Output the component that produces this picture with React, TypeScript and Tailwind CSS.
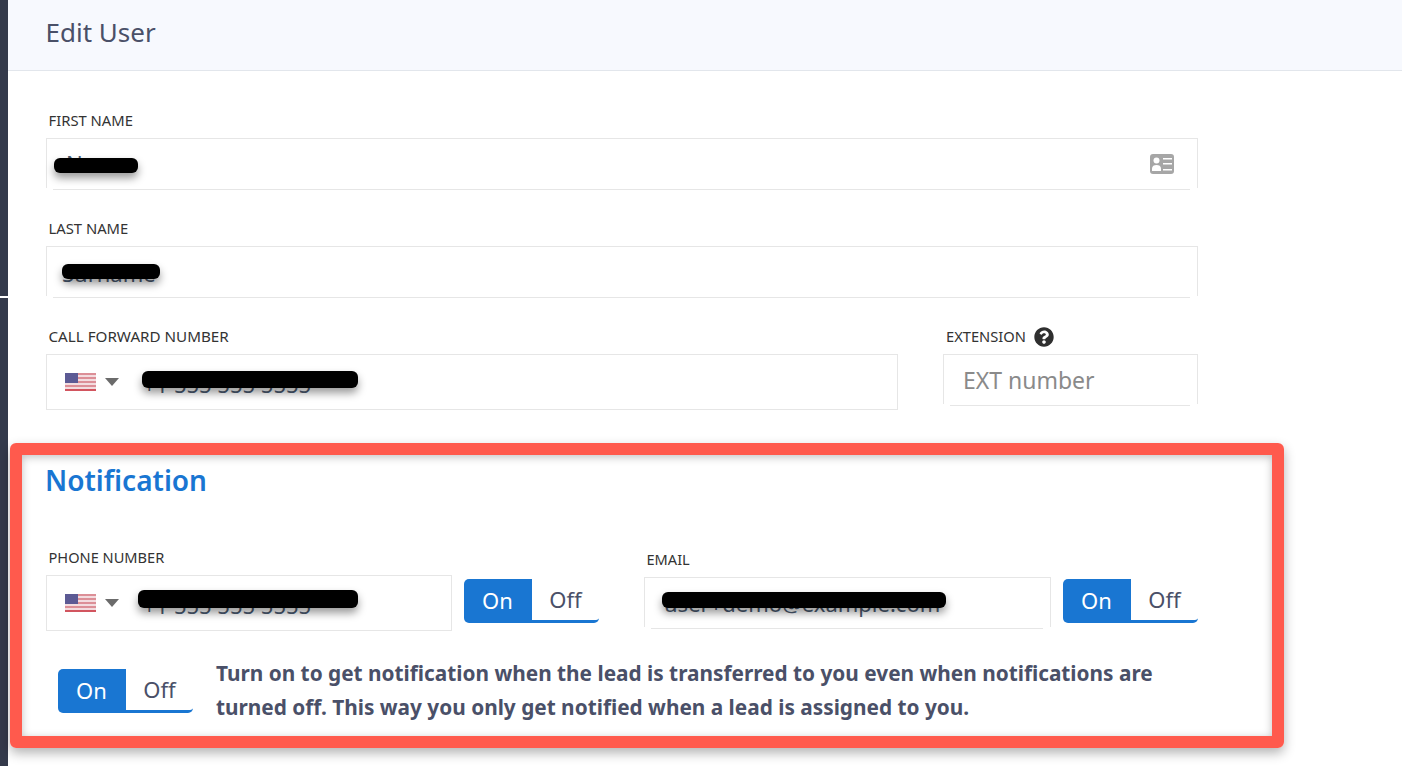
import React from 'react';
import { FaQuestionCircle } from 'react-icons/fa';

function Label({ children }: { children: React.ReactNode }) {
  return <div className="pl-[2.5px] text-[14.8px] leading-[15px] text-[#333]">{children}</div>;
}

function SmallLabel({ children }: { children: React.ReactNode }) {
  return <div className="pl-[2.5px] text-[14.6px] leading-[15px] text-[#333]">{children}</div>;
}

function Redaction({ className }: { className: string }) {
  return <div className={`absolute rounded-[6px] bg-black shadow-[0_5px_8px_rgba(0,0,0,0.4)] ${className}`} />;
}

// text field with the inset bottom line
function OpenInput({ className, children }: { className: string; children?: React.ReactNode }) {
  return (
    <div className={`relative h-[50px] border-x border-t border-[#e6e6e6] ${className}`}>
      {children}
      <div className="absolute -bottom-[2px] left-[6px] right-[7px] h-px bg-[#e6e6e6]" />
    </div>
  );
}

function Flag() {
  return (
    <svg width="31" height="18" viewBox="0 0 31 18" className="shrink-0">
      <rect width="31" height="18" fill="#f3dcdf" />
      <rect y="0" width="31" height="2" fill="#dc8f97" />
      <rect y="4" width="31" height="2" fill="#dc8f97" />
      <rect y="8" width="31" height="2" fill="#dc8f97" />
      <rect y="12" width="31" height="2" fill="#dc8f97" />
      <rect y="16" width="31" height="2" fill="#d2555f" />
      <rect width="13" height="10" fill="#5c5a94" />
    </svg>
  );
}

function Caret() {
  return (
    <svg width="14" height="8" viewBox="0 0 14 8" className="shrink-0">
      <path d="M0 0h14L7 8z" fill="#6b6b6b" />
    </svg>
  );
}

function IdCard() {
  return (
    <svg width="24" height="20" viewBox="0 0 24 20" className="absolute right-[23px] top-[15px]">
      <rect width="24" height="20" rx="3" fill="#a6a6a6" />
      <circle cx="6.5" cy="6.5" r="3" fill="#fff" />
      <path d="M2 17v-2.500C2 12 4 11 6.500 11S11 12 11 14.500V17z" fill="#fff" />
      <path d="M13 4h9v1.500h-9zM13 9h9v1.500h-9zM13 15h9v1.500h-9z" fill="#fff" />
    </svg>
  );
}

function PhoneBox({ className, barClass }: { className: string; barClass: string }) {
  return (
    <div className={`relative flex h-[56px] items-center border border-[#e6e6e6] pl-[18px] ${className}`}>
      <Flag />
      <div className="ml-[9px]"><Caret /></div>
      <span className="ml-[24px] pt-[4px] text-[22px] text-[#4a5a70]">+1 555 555 5555</span>
      <Redaction className={barClass} />
    </div>
  );
}

function Toggle({ className = '' }: { className?: string }) {
  return (
    <div className={`flex h-[44px] w-[135px] shrink-0 text-[22px] ${className}`}>
      <div className="flex w-[68px] items-center justify-center rounded-l-[5px] bg-[#1976d2] pb-[1px] pr-[1px] text-white">On</div>
      <div className="flex flex-1 items-center justify-center rounded-br-[5px] border-b-[3px] border-[#1976d2] text-[#4a5068]">Off</div>
    </div>
  );
}

export default function App() {
  return (
    <div className="flex h-[766px] w-[1402px] overflow-hidden bg-white font-['Noto_Sans',sans-serif]">
      <div className="flex w-2 shrink-0 flex-col">
        <div className="h-[296px] bg-[#343a4b]" />
        <div className="mt-[2px] flex-1 bg-[#343a4b]" />
      </div>
      <div className="flex-1">
        <div className="flex h-[71px] items-center border-b border-[#e2e6ec] bg-[#f7f9fe] pb-[6px] pl-[37.5px] text-[26px] text-[#4a5068]">
          Edit User
        </div>
        <div className="pl-[38px] pt-[42px]">
          <div className="w-[1152px]">
            <Label>FIRST NAME</Label>
            <OpenInput className="mt-[10px]">
              <span className="absolute left-[19px] top-[8px] text-[22px] text-[#4a5a70]">Name</span>
              <Redaction className="left-[7px] top-[19px] h-[15px] w-[84px]" />
              <IdCard />
            </OpenInput>

            <div className="mt-[33px]"><Label>LAST NAME</Label></div>
            <OpenInput className="mt-[10px]">
              <span className="absolute left-[15px] top-[10px] text-[22px] text-[#4a5a70]">Surname</span>
              <Redaction className="left-[15px] top-[17px] h-[15px] w-[98px]" />
            </OpenInput>

            <div className="mt-[33px] flex items-start">
              <div className="w-[852px]">
                <div className="pl-[2.5px] text-[15.2px] leading-[15px] text-[#333]">CALL FORWARD NUMBER</div>
                <PhoneBox className="mt-[10px]" barClass="left-[95px] top-[16px] h-[17px] w-[216px]" />
              </div>
              <div className="-mt-[2px] ml-[45px] flex-1">
                <div className="flex items-start gap-[8px] pl-[3px]">
                  <span className="pt-[1px] text-[14.7px] leading-[16px] text-[#333]">EXTENSION</span>
                  <FaQuestionCircle className="text-[20px] text-[#2f2f2f]" />
                </div>
                <OpenInput className="mt-[7px]">
                  <span className="absolute left-[19px] top-[8px] text-[23px] text-[#8a8a8a]">EXT number</span>
                </OpenInput>
              </div>
            </div>
          </div>

          {/* Notification block with its red outline */}
          <div className="ml-[-36px] mt-[33px] h-[305px] w-[1274px] rounded-[6px] border-[12px] border-[#ff5a4d] pl-[24px] shadow-[0_5px_12px_rgba(0,0,0,0.3),inset_0_2px_8px_rgba(0,0,0,0.25)]">
            <div className="-ml-px flex h-[52px] items-center pb-[2px] text-[28px] font-semibold text-[#1976d2]">Notification</div>

            <div className="mt-[43px] flex items-start">
              <div className="w-[406px]">
                <SmallLabel>PHONE NUMBER</SmallLabel>
                <PhoneBox className="mt-[10px]" barClass="left-[91px] top-[14px] h-[18px] w-[220px]" />
              </div>
              <Toggle className="ml-[12px] mt-[29px]" />
              <div className="ml-[45px] mt-[2px] w-[407px]">
                <SmallLabel>EMAIL</SmallLabel>
                <OpenInput className="mt-[10px]">
                  <span className="absolute left-[19px] top-[9px] text-[22px] text-[#4a5a70]">user+demo@example.com</span>
                  <Redaction className="left-[17px] top-[14px] h-[16px] w-[284px]" />
                </OpenInput>
              </div>
              <Toggle className="ml-[12px] mt-[29px]" />
            </div>

            <div className="mt-[25px] flex items-start">
              <Toggle className="ml-[12px] mt-[13px]" />
              <p className="ml-[23px] w-[950px] text-[20.8px] font-bold leading-[34px] text-[#4a5068]">
                Turn on to get notification when the lead is transferred to you even when notifications are turned off. This way you only get notified when a lead is assigned to you.
              </p>
            </div>
          </div>
        </div>
      </div>
    </div>
  );
}
